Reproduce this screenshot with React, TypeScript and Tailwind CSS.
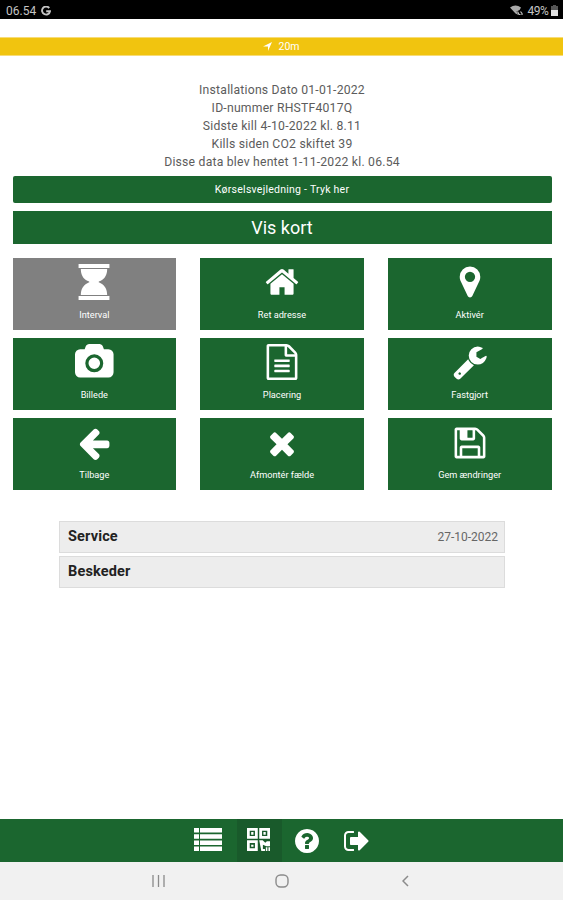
import type { ReactNode } from 'react'

type GlyphProps = {
  d: string
  size?: number
  viewBox?: string
  className?: string
}

function Glyph({ d, size = 36, viewBox = '0 0 1792 1792', className }: GlyphProps) {
  return (
    <svg height={size} viewBox={viewBox} fill="currentColor" className={className}>
      <path d={d} />
    </svg>
  )
}

const paths = {
  hourglass:
    'M128 0h1536v200H128zM128 1592h1536v200H128zM240 250h1312c0 300-130 480-300 575-70 35-130 50-130 71s60 36 130 71c170 95 300 275 300 575H240c0-300 130-480 300-575 70-35 130-50 130-71s-60-36-130-71C370 730 240 550 240 250z',
  home: 'M1472 992v480q0 26-19 45t-45 19h-384v-384h-256v384h-384q-26 0-45-19t-19-45v-480q0-1 .5-3t.5-3l575-474 575 474q1 2 1 6zm223-69l-62 74q-8 9-21 11h-3q-13 0-21-7l-692-577-692 577q-12 8-24 7-13-2-21-11l-62-74q-8-10-7-23.5t11-21.5l719-599q32-26 76-26t76 26l244 204v-195q0-14 9-23t23-9h192q14 0 23 9t9 23v408l219 182q10 8 11 21.5t-7 23.5z',
  marker:
    'M1152 640q0-106-75-181t-181-75-181 75-75 181 75 181 181 75 181-75 75-181zm256 0q0 109-33 179l-364 774q-16 33-47.5 52t-67.5 19-67.5-19-46.5-52l-365-774q-33-70-33-179 0-212 150-362t362-150 362 150 150 362z',
  camera:
    'M896 672q119 0 203.5 84.5t84.5 203.5-84.5 203.5-203.5 84.5-203.5-84.5-84.5-203.5 84.5-203.5 203.5-84.5zm704-416q106 0 181 75t75 181v896q0 106-75 181t-181 75h-1408q-106 0-181-75t-75-181v-896q0-106 75-181t181-75h224l51-136q19-49 69.5-84.5t103.5-35.5h512q53 0 103.5 35.5t69.5 84.5l51 136h224zm-704 1152q185 0 316.5-131.5t131.5-316.5-131.5-316.5-316.5-131.5-316.5 131.5-131.5 316.5 131.5 316.5 316.5 131.5z',
  file: 'M1596 380q28 28 48 76t20 88v1152q0 40-28 68t-68 28h-1344q-40 0-68-28t-28-68v-1600q0-40 28-68t68-28h896q40 0 88 20t76 48zm-444-244v376h376q-10-29-22-41l-313-313q-12-12-41-22zm384 1528v-1024h-416q-40 0-68-28t-28-68v-416h-768v1536h1280zm-1024-864q0-14 9-23t23-9h704q14 0 23 9t9 23v64q0 14-9 23t-23 9h-704q-14 0-23-9t-9-23v-64zm736 224q14 0 23 9t9 23v64q0 14-9 23t-23 9h-704q-14 0-23-9t-9-23v-64q0-14 9-23t23-9h704zm0 256q14 0 23 9t9 23v64q0 14-9 23t-23 9h-704q-14 0-23-9t-9-23v-64q0-14 9-23t23-9h704z',
  wrench:
    'M448 1472q0-26-19-45t-45-19-45 19-19 45 19 45 45 19 45-19 19-45zm644-420l-682 682q-37 37-90 37-52 0-91-37l-106-108q-38-36-38-90 0-53 38-91l681-681q39 98 114.5 173.5t173.5 114.5zm634-435q0 39-23 106-47 134-164.5 217.5t-258.5 83.5q-185 0-316.5-131.5t-131.5-316.5 131.5-316.5 316.5-131.5q58 0 121.5 16.5t107.5 46.5q16 11 16 28t-16 28l-293 169v224l193 107q5-3 79-48.5t135.5-81 70.5-35.5q15 0 23.5 10t8.5 25z',
  left: 'M1664 896v128q0 53-32.5 90.5t-84.5 37.5h-704l293 294q38 36 38 90t-38 90l-75 76q-37 37-90 37-52 0-91-37l-651-652q-37-37-37-90 0-52 37-91l651-650q38-38 91-38 52 0 90 38l75 74q38 38 38 91t-38 91l-293 293h704q52 0 84.5 37.5t32.5 90.5z',
  times:
    'M1490 1322q0 40-28 68l-136 136q-28 28-68 28t-68-28l-294-294-294 294q-28 28-68 28t-68-28l-136-136q-28-28-28-68t28-68l294-294-294-294q-28-28-28-68t28-68l136-136q28-28 68-28t68 28l294 294 294-294q28-28 68-28t68 28l136 136q28 28 28 68t-28 68l-294 294 294 294q28 28 28 68z',
  floppy:
    'M512 1536h768v-384h-768v384zm896 0h128v-896q0-14-10-38.5t-20-34.5l-281-281q-10-10-34-20t-39-10v416q0 40-28 68t-68 28h-576q-40 0-68-28t-28-68v-416h-128v1280h128v-416q0-40 28-68t68-28h832q40 0 68 28t28 68v416zm-384-928v-320q0-13-9.5-22.5t-22.5-9.5h-192q-13 0-22.5 9.5t-9.5 22.5v320q0 13 9.5 22.5t22.5 9.5h192q13 0 22.5-9.5t9.5-22.5zm640 32v928q0 40-28 68t-68 28h-1344q-40 0-68-28t-28-68v-1344q0-40 28-68t68-28h928q40 0 88 20t76 48l280 280q28 28 48 76t20 88z',
  question:
    'M1024 1376v-192q0-14-9-23t-23-9h-192q-14 0-23 9t-9 23v192q0 14 9 23t23 9h192q14 0 23-9t9-23zm256-672q0-88-55.5-163t-138.5-116-170-41q-243 0-371 213-15 24 8 42l132 100q7 6 19 6 16 0 25-12 53-68 86-92 34-24 86-24 48 0 85.5 26t37.5 59q0 38-20 61t-68 45q-63 28-115.5 86.5t-52.5 125.5v36q0 14 9 23t23 9h192q14 0 23-9t9-23q0-19 21.5-49.5t54.5-49.5q32-18 49-28.5t46-35 44.5-48 28-60.5 12.5-81zm384 192q0 209-103 385.5t-279.5 279.5-385.5 103-385.5-103-279.5-279.5-103-385.5 103-385.5 279.5-279.5 385.5-103 385.5 103 279.5 279.5 103 385.5z',
  signOut:
    'M704 1440q0 4 1 20t.5 26.5-3 23.5-10 19.5-20.5 6.5h-320q-119 0-203.5-84.5t-84.5-203.5v-704q0-119 84.5-203.5t203.5-84.5h320q13 0 22.5 9.5t9.5 22.5q0 4 1 20t.5 26.5-3 23.5-10 19.5-20.5 6.5h-320q-66 0-113 47t-47 113v704q0 66 47 113t113 47h312l11.5 1 11.5 3 8 5.5 7 9 2 13.5zm928-544q0 26-19 45l-544 544q-19 19-45 19t-45-19-19-45v-288h-448q-26 0-45-19t-19-45v-384q0-26 19-45t45-19h448v-288q0-26 19-45t45-19 45 19l544 544q19 19 19 45z',
}

const info = [
  'Installations Dato 01-01-2022',
  'ID-nummer RHSTF4017Q',
  'Sidste kill 4-10-2022 kl. 8.11',
  'Kills siden CO2 skiftet 39',
  'Disse data blev hentet 1-11-2022 kl. 06.54',
]

const tiles = [
  { label: 'Interval', icon: paths.hourglass, disabled: true },
  { label: 'Ret adresse', icon: paths.home },
  { label: 'Aktivér', icon: paths.marker },
  { label: 'Billede', icon: paths.camera, viewBox: '-64 0 1920 1792' },
  { label: 'Placering', icon: paths.file },
  { label: 'Fastgjort', icon: paths.wrench },
  { label: 'Tilbage', icon: paths.left },
  { label: 'Afmontér fælde', icon: paths.times },
  { label: 'Gem ændringer', icon: paths.floppy },
]

function StatusBar() {
  return (
    <div className="flex h-[19px] items-center justify-between bg-black pr-[5px] pl-1.5 pt-[2px] text-[12px] text-[#c4c4c4]">
      <div className="flex items-center gap-[5px]">
        <span>06.54</span>
        <svg width="10" height="10" viewBox="0 0 10 10" fill="none" stroke="currentColor" strokeWidth="1.9">
          <path d="M8.2 2.1A4 4 0 1 0 9 5.3H5.2" />
        </svg>
      </div>
      <div className="flex items-center">
        <svg width="13" height="11" viewBox="0 0 13 11" className="mr-[4px]">
          <path d="M0 2.6Q5.5-1.5 11 2.6L9.6 5 6.5 6.5 8.5 10 5.5 8.5z" fill="#a8a8a8" />
          <path d="M7.5 6.5l1.5 3h1.5M10.5 6.5l1.5 2v1.5" fill="none" stroke="#c4c4c4" strokeWidth="1.2" />
        </svg>
        <span className="tracking-[-0.4px]">49%</span>
        <svg width="7" height="11" viewBox="0 0 7 11" className="ml-[2.5px]">
          <path d="M2 0h3v1h2v4H0V1h2z" fill="#555" />
          <path d="M0 5h7v6H0z" fill="#e2e2e2" />
        </svg>
      </div>
    </div>
  )
}

function NavItem({ active, children }: { active?: boolean; children: ReactNode }) {
  return (
    <div className={`flex h-full items-center justify-center ${active ? 'w-[45px] bg-[#195a2b]' : 'w-[49px]'}`}>
      {children}
    </div>
  )
}

function BottomNav() {
  return (
    <nav className="flex h-[43px] justify-center bg-[#1b662f] pr-[4px] text-white">
      <div className="flex h-full w-[57px] items-center justify-center">
        <svg width="28" height="23" viewBox="0 0 28 23" fill="currentColor" className="-mt-[2px]">
          <path d="M0 0h5v4.5H0zM6 0h22v4.5H6zM0 6.2h5v4.5H0zM6 6.2h22v4.5H6zM0 12.4h5v4.5H0zM6 12.4h22v4.5H6zM0 18.5h5V23H0zM6 18.5h22V23H6z" />
        </svg>
      </div>
      <NavItem active>
        <svg width="23" height="23" viewBox="0 0 22 22" fill="currentColor" className="-mt-[2px] mr-px">
          <path
            fillRule="evenodd"
            d="M0 0h10.3v10.3H0zM2.6 2.6v5h5v-5zM11.7 0H22v10.3H11.7zM14.4 2.6v5h5v-5zM0 11.7h10.3V22H0zM2.6 14.4v5h5v-5z"
          />
          <path d="M4 3.8h2.2v2.6H4zM15.7 3.8h2.2v2.6h-2.2zM4 16h2.2v2H4zM11.7 11.7h3.3l2.5 2.5 1.5-1.500h3v4.8h-3.5l-3.300-1.500V20h2v2h-3.500zM18 18.500h1.500V22H18zM20.500 18.500H22V22h-1.500z" />
        </svg>
      </NavItem>
      <NavItem>
        <Glyph d={paths.question} size={28} className="ml-[2px]" />
      </NavItem>
      <NavItem>
        <Glyph d={paths.signOut} size={28} className="ml-[3px]" />
      </NavItem>
    </nav>
  )
}

function SystemNav() {
  return (
    <div className="grid h-[38px] grid-cols-[159px_246px_1fr] bg-[#f1f1f1] text-[#8b8b8b]">
      <div className="flex items-center justify-end">
        <svg width="13" height="12" viewBox="0 0 13 12" stroke="currentColor" strokeWidth="1.3" className="-mr-1.5">
          <path d="M1 0v12M6.5 0v12M12 0v12" />
        </svg>
      </div>
      <div className="flex items-center justify-center">
        <svg width="14" height="14" viewBox="0 0 14 14" fill="none" stroke="currentColor" strokeWidth="1.4">
          <rect x="1" y="1" width="12" height="12" rx="4.5" />
        </svg>
      </div>
      <div className="flex items-center">
        <svg width="7" height="12" viewBox="0 0 7 12" fill="none" stroke="currentColor" strokeWidth="1.5" className="-ml-[3px]">
          <path d="M6 1L1 6l5 5" />
        </svg>
      </div>
    </div>
  )
}

export default function App() {
  return (
    <div className="flex h-[900px] w-[563px] flex-col overflow-hidden bg-white font-[Roboto,sans-serif]">
      <StatusBar />

      <div className="mt-[18px] flex h-[19px] items-center justify-center gap-1.5 border-y border-[#f7dc78] bg-[#f1c40f] text-[10.5px] text-white">
        <svg width="9" height="9" viewBox="0 0 9 9" fill="currentColor">
          <path d="M9 0L5 9V4.6H0z" />
        </svg>
        <span>20m</span>
      </div>

      <main className="flex-1 pt-[25px] pr-[11.5px] pl-[12.5px]">
        <div className="text-center text-[12.2px] leading-[18px] tracking-[0.22px] text-[#5c5c5c]">
          {info.map((line) => (
            <p key={line}>{line}</p>
          ))}
        </div>

        <button className="mt-[5px] flex h-[27px] w-full items-center justify-center rounded-[2px] bg-[#1b662f] text-[10.5px] tracking-[0.25px] text-white">
          Kørselsvejledning - Tryk her
        </button>
        <button className="mt-2 flex h-[33px] w-full items-center justify-center bg-[#1b662f] text-[18px] text-white">
          Vis kort
        </button>

        <div className="mt-[13.5px] grid grid-cols-3 gap-x-6 gap-y-[8.4px]">
          {tiles.map((tile) => (
            <button
              key={tile.label}
              className={`flex h-[72px] flex-col items-center pt-[6.5px] text-[9.2px] leading-3 text-white ${tile.disabled ? 'bg-[#808080]' : 'bg-[#1b662f]'}`}
            >
              <Glyph d={tile.icon} viewBox={tile.viewBox} />
              <span className="mt-[8.5px]">{tile.label}</span>
            </button>
          ))}
        </div>

        <div className="mt-[30.5px] mr-[46.5px] ml-[46px] flex flex-col gap-[3px]">
          <div className="flex h-8 items-center justify-between border border-[#dcdcdc] bg-[#ededed] pr-[6px] pl-[8.5px]">
            <span className="pt-px text-[14.5px] font-bold tracking-[0.15px] text-[#222]">Service</span>
            <span className="text-[12px] text-[#666]">27-10-2022</span>
          </div>
          <div className="flex h-8 items-center border border-[#dcdcdc] bg-[#ededed] pl-[8.5px]">
            <span className="pt-px text-[14.5px] font-bold tracking-[0.15px] text-[#222]">Beskeder</span>
          </div>
        </div>
      </main>

      <BottomNav />
      <SystemNav />
    </div>
  )
}
